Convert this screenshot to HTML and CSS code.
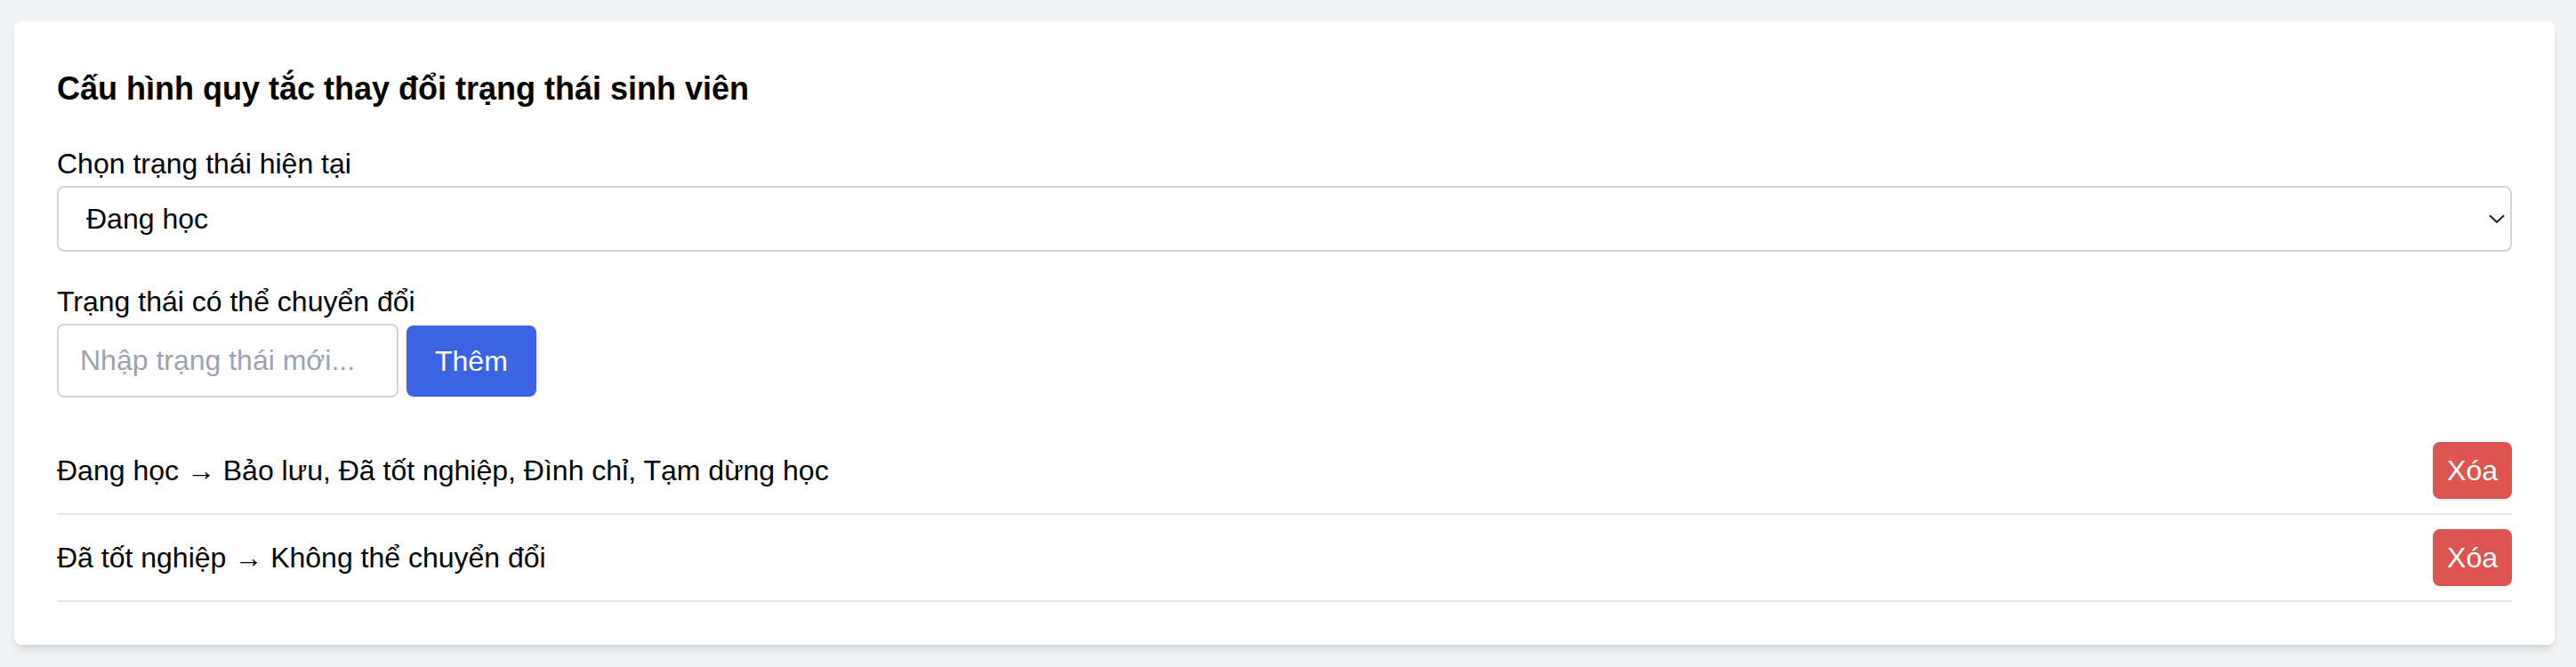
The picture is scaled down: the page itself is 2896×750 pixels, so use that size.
FILE: index.html
```html
<!DOCTYPE html>
<html lang="vi">
<head>
<meta charset="utf-8">
<title>Cấu hình quy tắc</title>
<link rel="stylesheet" href="styles.css">
</head>
<body>
<main class="page">
  <section class="card">
    <h2 class="title">Cấu hình quy tắc thay đổi trạng thái sinh viên</h2>

    <label class="label" for="current">Chọn trạng thái hiện tại</label>
    <div class="select-wrap">
      <select id="current" class="select">
        <option>Đang học</option>
        <option>Bảo lưu</option>
        <option>Đã tốt nghiệp</option>
      </select>
      <svg class="chevron" width="18" height="10" viewBox="0 0 18 10" aria-hidden="true">
        <path d="M1 1.2 L9 8.8 L17 1.2" fill="none" stroke="#1e1e1e" stroke-width="2"/>
      </svg>
    </div>

    <label class="label label-2" for="newstate">Trạng thái có thể chuyển đổi</label>
    <div class="add-row">
      <input id="newstate" class="input" type="text" placeholder="Nhập trạng thái mới...">
      <button class="btn btn-blue" type="button">Thêm</button>
    </div>

    <ul class="rules">
      <li class="rule">
        <span class="rule-text">Đang học → Bảo lưu, Đã tốt nghiệp, Đình chỉ, Tạm dừng học</span>
        <button class="btn btn-red" type="button">Xóa</button>
      </li>
      <li class="rule">
        <span class="rule-text">Đã tốt nghiệp → Không thể chuyển đổi</span>
        <button class="btn btn-red" type="button">Xóa</button>
      </li>
    </ul>
  </section>
</main>
</body>
</html>
```

FILE: styles.css
```css
* { box-sizing: border-box; }

html, body {
  margin: 0;
  background: #f3f4f6;
  font-family: "Liberation Sans", Arial, sans-serif;
  color: #000;
}

.page {
  padding: 24px 24px 27px 16px;
}

.card {
  background: #fff;
  border-radius: 8px;
  padding: 48px;
  box-shadow: 0 8px 12px -2px rgba(0,0,0,0.10), 0 4px 8px -4px rgba(0,0,0,0.10);
}

.title {
  margin: 0 0 32px;
  font-size: 36px;
  line-height: 56px;
  font-weight: 700;
}

.label {
  display: block;
  font-size: 32px;
  line-height: 48px;
  margin-bottom: 1px;
}

.label-2 { margin-top: 32px; }

.select-wrap {
  position: relative;
}

.select {
  -webkit-appearance: none;
  appearance: none;
  display: block;
  width: 100%;
  height: 74px;
  border: 2px solid #d1d5db;
  border-radius: 8px;
  background: #fff;
  padding: 0 60px 0 31px;
  font-family: inherit;
  font-size: 32px;
  color: #000;
}

.chevron {
  position: absolute;
  right: 8px;
  top: 32px;
}

.add-row {
  display: flex;
  align-items: center;
  gap: 9px;
}

.input {
  width: 384px;
  height: 83px;
  border: 2px solid #d1d5db;
  border-radius: 8px;
  padding: 0 24px;
  font-family: inherit;
  font-size: 32px;
  color: #000;
  outline: none;
}

.input::placeholder { color: #9ca3af; }

.btn {
  border: 0;
  border-radius: 8px;
  color: #fff;
  font-family: inherit;
  font-size: 32px;
  line-height: 48px;
  cursor: pointer;
}

.btn-blue {
  background: #3b64e3;
  padding: 16px 32px;
}

.btn-red {
  background: #de5450;
  padding: 8px 16px;
}

.rules {
  list-style: none;
  margin: 34px 0 0;
  padding: 0;
}

.rule {
  display: flex;
  align-items: center;
  justify-content: space-between;
  padding: 16px 0;
  border-bottom: 2px solid #e5e7eb;
}

.rule-text {
  font-size: 32px;
  line-height: 48px;
}
```
